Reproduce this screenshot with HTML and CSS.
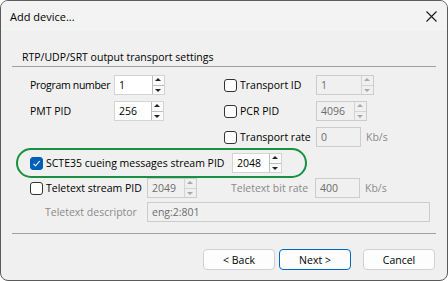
FILE: index.html
```html
<!DOCTYPE html>
<html lang="en">
<head>
    <meta charset="UTF-8">
    <title>Add device...</title>
    <link rel="stylesheet" href="styles.css">
</head>
<body>

<div class="window">
    <div class="titlebar">
        <span class="title">Add device...</span>
        <svg class="close" width="11" height="11" viewBox="0 0 11 11">
            <path d="M0.5 0.5 L10.5 10.5 M10.5 0.5 L0.5 10.5" stroke="#1a1a1a" stroke-width="1.1"/>
        </svg>
    </div>

    <div class="content">
        <div class="group-title">RTP/UDP/SRT output transport settings</div>
        <div class="rule"></div>

        <!-- row 1 -->
        <div class="row">
            <div class="col-left">
                <span class="label w84 tight">Program number</span>
                <div class="spin w51">
                    <span class="value">1</span>
                    <div class="arrows"><span class="up"></span><span class="down"></span></div>
                </div>
            </div>
            <label class="check w92"><span class="box"></span>Transport ID</label>
            <div class="spin w58 disabled">
                <span class="value">1</span>
                <div class="arrows"><span class="up"></span><span class="down"></span></div>
            </div>
        </div>

        <!-- row 2 -->
        <div class="row">
            <div class="col-left">
                <span class="label w84">PMT PID</span>
                <div class="spin w50">
                    <span class="value">256</span>
                    <div class="arrows"><span class="up"></span><span class="down"></span></div>
                </div>
            </div>
            <label class="check w92"><span class="box"></span>PCR PID</label>
            <div class="spin w51 disabled">
                <span class="value">4096</span>
                <div class="arrows"><span class="up"></span><span class="down"></span></div>
            </div>
        </div>

        <!-- row 3 -->
        <div class="row">
            <div class="col-left"></div>
            <label class="check w92"><span class="box"></span>Transport rate</label>
            <div class="edit w45 disabled"><span class="value">0</span></div>
            <span class="unit">Kb/s</span>
        </div>

        <!-- row 4, highlighted -->
        <div class="row marked">
            <div class="highlight"></div>
            <label class="check w202"><span class="box checked">
                <svg width="9" height="9" viewBox="0 0 9 9"><path d="M1.5 4.8 L3.6 6.8 L7.6 2.2" fill="none" stroke="#fff" stroke-width="1.1"/></svg>
            </span>SCTE35 cueing messages stream PID</label>
            <div class="spin w50">
                <span class="value">2048</span>
                <div class="arrows"><span class="up"></span><span class="down"></span></div>
            </div>
        </div>

        <!-- row 5 -->
        <div class="row short">
            <label class="check w117"><span class="box"></span>Teletext stream PID</label>
            <div class="spin w50 disabled">
                <span class="value">2049</span>
                <div class="arrows"><span class="up"></span><span class="down"></span></div>
            </div>
            <span class="label grey w84 gap34">Teletext bit rate</span>
            <div class="edit w45 disabled"><span class="value">400</span></div>
            <span class="unit">Kb/s</span>
        </div>

        <!-- row 6 -->
        <div class="row short">
            <span class="label grey w102 indent">Teletext descriptor</span>
            <div class="edit w283 disabled"><span class="value">eng:2:801</span></div>
        </div>

        <div class="rule bottom"></div>

        <div class="buttons">
            <button class="btn">&lt; Back</button>
            <button class="btn default">Next &gt;</button>
            <button class="btn cancel">Cancel</button>
        </div>
    </div>
</div>

</body>
</html>
```

FILE: styles.css
```css
body {
    margin: 0;
    font-family: "Open Sans", "Noto Sans", sans-serif;
    font-size: 10.5px;
    color: #000;
    background: #fff;
}
.window {
    width: 448px;
    height: 281px;
    box-sizing: border-box;
    border: 1px solid #5a5a5a;
    border-radius: 8px;
    background-color: #f0f0f0;
    overflow: hidden;
}
.titlebar {
    height: 30px;
    background-color: #f3f3f3;
    display: flex;
    align-items: center;
    justify-content: space-between;
    padding: 0 10px 0 9px;
}
.title {
    font-size: 11px;
}
.close {
    display: block;
}
.content {
    padding: 0 11px 0 11px;
}
.group-title {
    margin-top: 18px;
    padding-left: 10px;
    height: 16px;
    line-height: 16px;
}
.rule {
    border-top: 1px solid #a0a0a0;
    margin-top: 1px;
    margin-bottom: 5px;
}
.rule.bottom {
    margin-top: 9px;
    margin-bottom: 0;
}
.row {
    display: flex;
    align-items: center;
    height: 26px;
    padding-left: 18px;
}
.row.short {
    height: 24px;
}
.row.marked {
    position: relative;
}
.highlight {
    position: absolute;
    left: 4px;
    top: -2px;
    width: 291px;
    height: 30px;
    box-sizing: border-box;
    border: 2.5px solid #17913f;
    border-radius: 15px;
}
.col-left {
    display: flex;
    align-items: center;
    width: 194px;
}
.label {
    white-space: nowrap;
}
.label.tight {
    letter-spacing: -0.3px;
}
.label.grey {
    color: #8a8a8a;
}
.gap34 {
    margin-left: 34px;
}
.indent {
    margin-left: 15px;
}
.w45 { width: 45px; }
.w50 { width: 50px; }
.w51 { width: 51px; }
.w58 { width: 58px; }
.w84 { width: 84px; }
.w92 { width: 92px; }
.w102 { width: 102px; }
.w117 { width: 117px; }
.w202 { width: 202px; }
.w283 { width: 283px; }

.check {
    display: flex;
    align-items: center;
    white-space: nowrap;
}
.box {
    width: 13px;
    height: 13px;
    box-sizing: border-box;
    border: 1px solid #333;
    border-radius: 3px;
    background: #fff;
    margin-right: 3px;
    display: flex;
    align-items: center;
    justify-content: center;
}
.box.checked {
    background-color: #005fb8;
    border-color: #005fb8;
}
.box svg {
    display: block;
}

.spin, .edit {
    height: 20px;
    box-sizing: border-box;
    border: 1px solid #d4d4d4;
    background: #fff;
    display: flex;
    align-items: center;
    position: relative;
}
.spin .value, .edit .value {
    flex: 1;
    padding-left: 4px;
}
.arrows {
    width: 11px;
    height: 18px;
    display: flex;
    flex-direction: column;
    border-left: 1px solid #bdbdbd;
}
.arrows span {
    flex: 1;
    background: #fafafa;
    position: relative;
}
.arrows .up {
    border-bottom: 1px solid #bdbdbd;
}
.arrows span::after {
    content: "";
    position: absolute;
    left: 2px;
    border-left: 3px solid transparent;
    border-right: 3px solid transparent;
}
.arrows .up::after {
    top: 2px;
    border-bottom: 3px solid #222;
}
.arrows .down::after {
    top: 3px;
    border-top: 3px solid #222;
}
.disabled {
    background: #f0f0f0;
    border-color: #cccccc;
    color: #6d6d6d;
}
.disabled .arrows {
    border-left-color: #d4d4d4;
}
.disabled .arrows span {
    background: #f0f0f0;
}
.disabled .arrows .up {
    border-bottom-color: #d4d4d4;
}
.disabled .arrows .up::after {
    border-bottom-color: #a8a8a8;
}
.disabled .arrows .down::after {
    border-top-color: #a8a8a8;
}
.unit {
    margin-left: 5px;
    color: #8a8a8a;
}

.buttons {
    display: flex;
    justify-content: flex-end;
    margin-top: 15px;
    padding-right: 1px;
}
.btn {
    width: 72px;
    height: 21px;
    font-family: inherit;
    font-size: 10.5px;
    color: #000;
    background: #fdfdfd;
    border: 1px solid #d0d0d0;
    border-radius: 4px;
    padding: 0;
    margin-left: 4px;
}
.btn.default {
    border-color: #0067c0;
}
.btn.cancel {
    margin-left: 12px;
}
```
